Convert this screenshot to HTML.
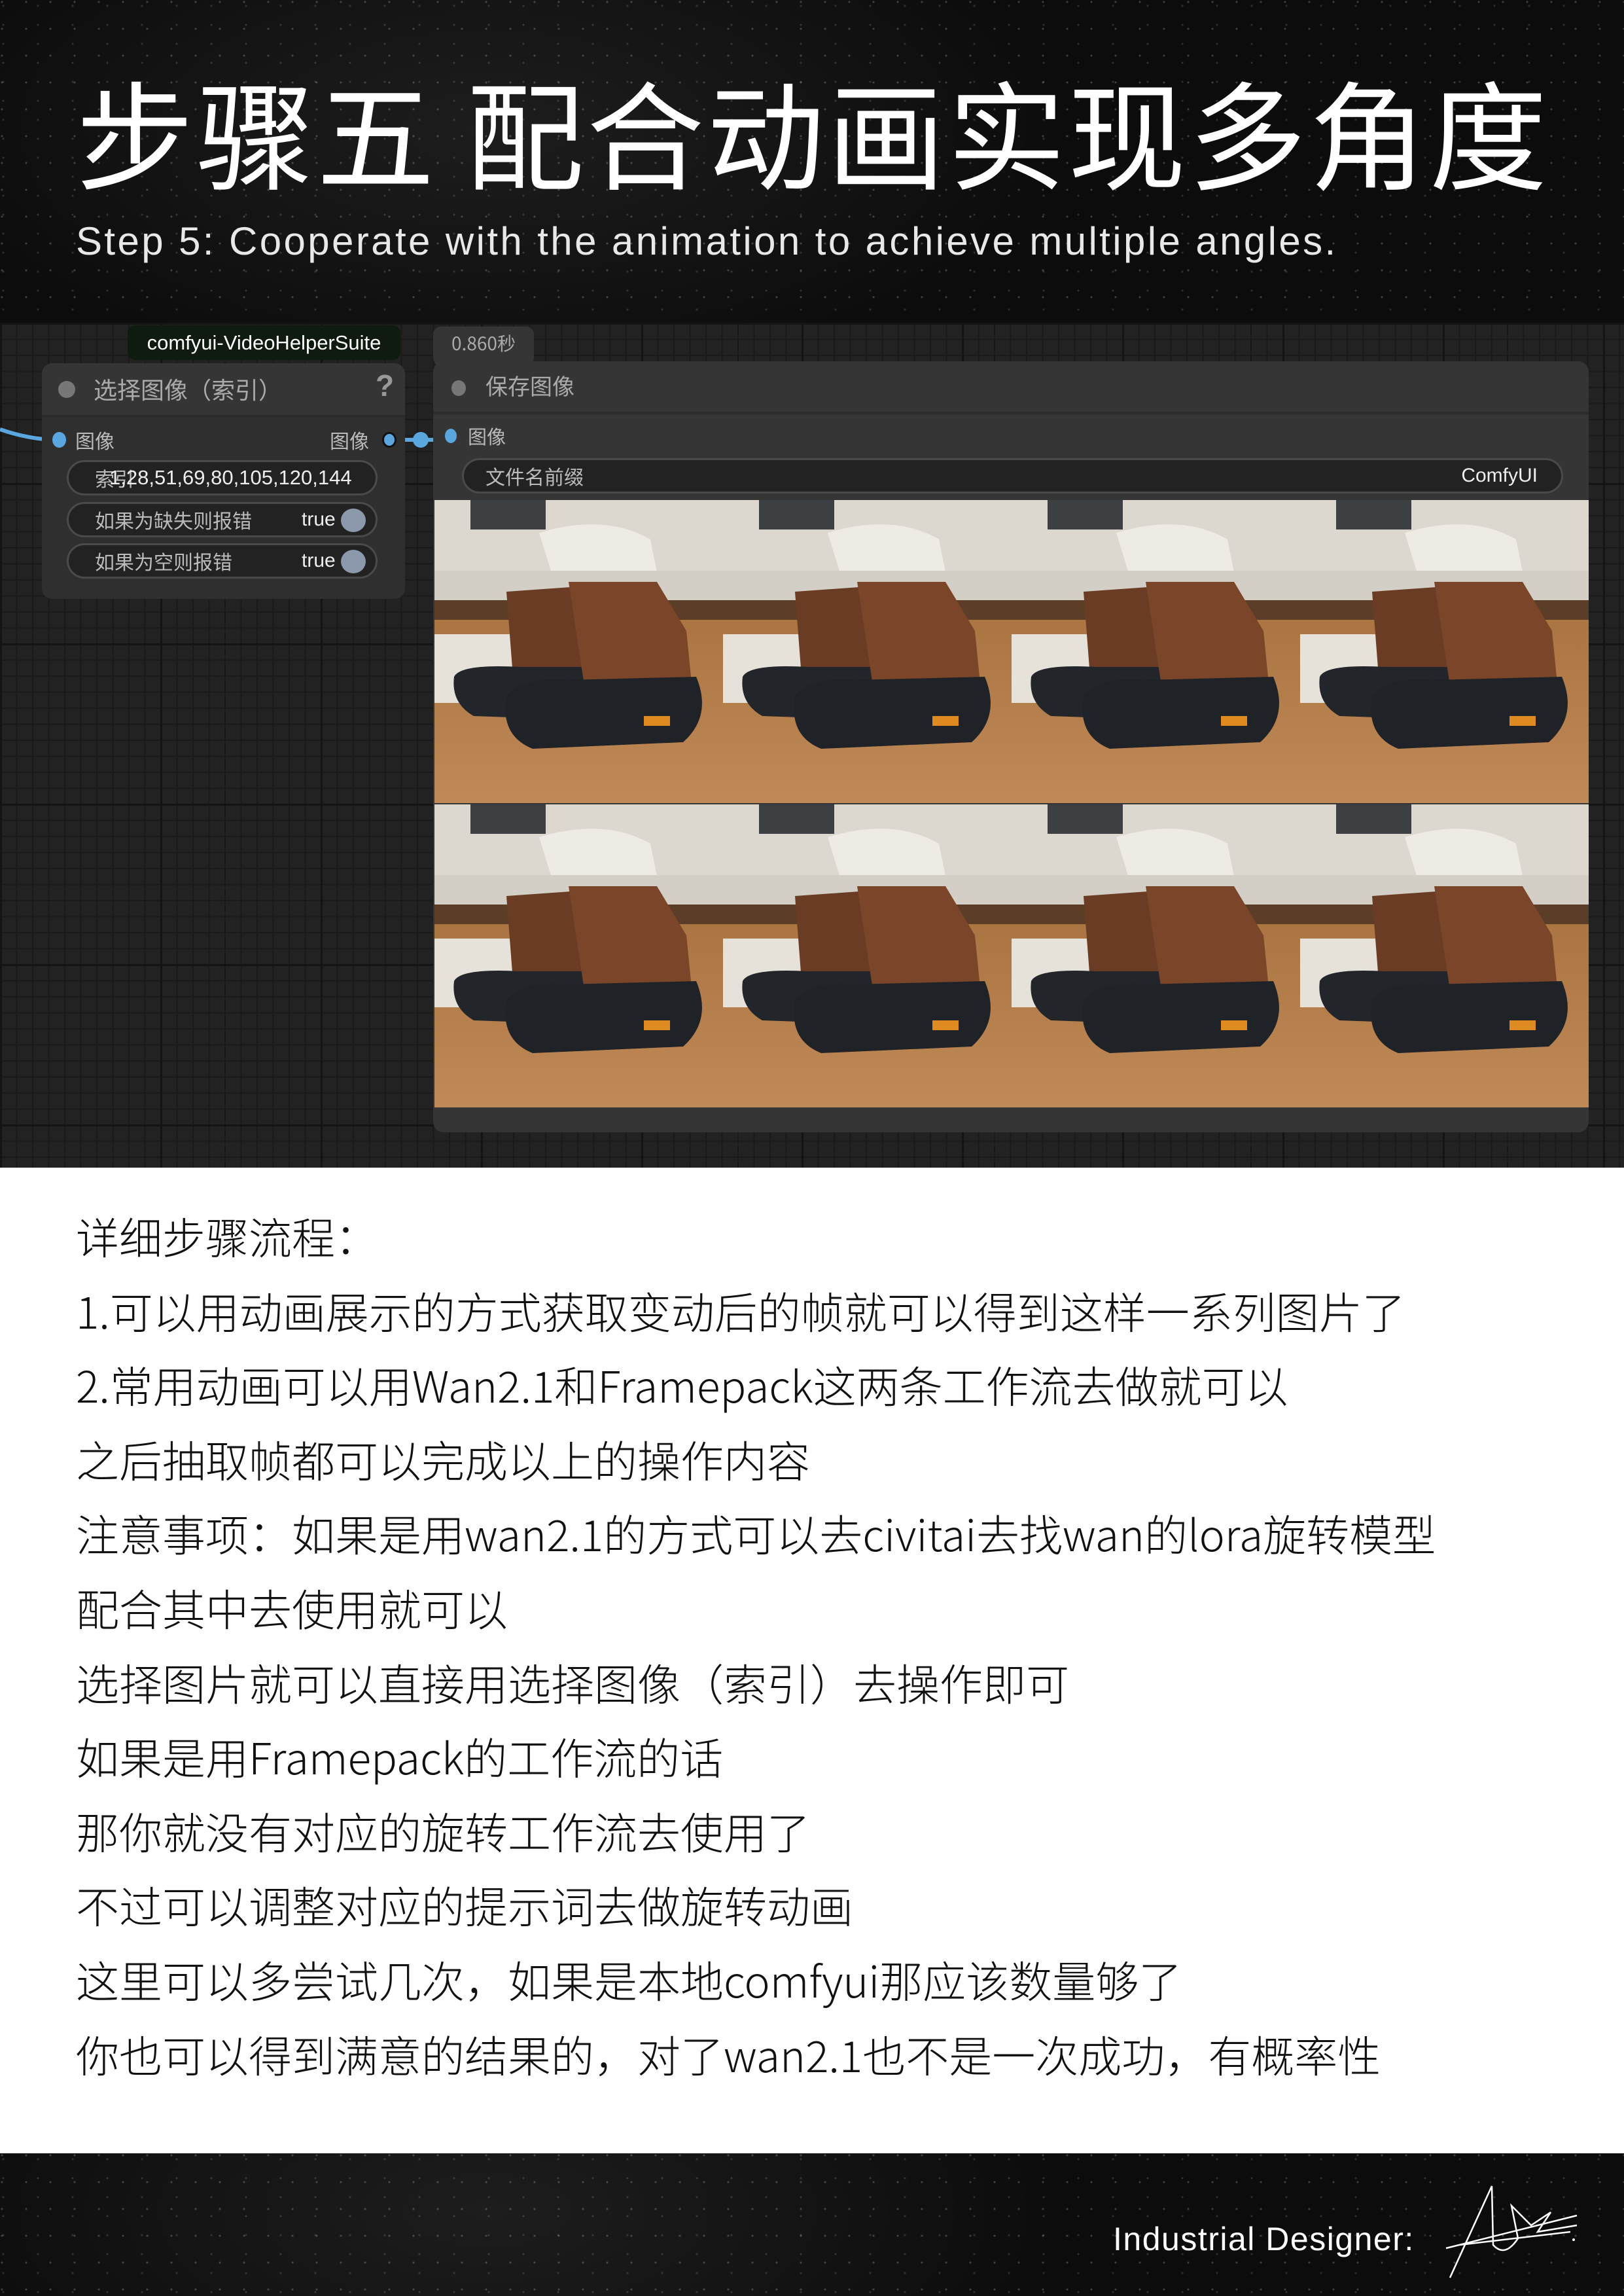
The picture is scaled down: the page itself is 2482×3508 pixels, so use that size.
<!DOCTYPE html>
<html><head><meta charset="utf-8"><style>
*{margin:0;padding:0;box-sizing:border-box}
html,body{width:2482px;height:3508px;overflow:hidden;background:#fff}
body{position:relative;font-family:"Liberation Sans","Noto Sans CJK SC",sans-serif}
.abs{position:absolute}
.space{background:
radial-gradient(circle at 3px 3px,rgba(255,255,255,.22) 1px,transparent 2px) 0 0/37px 41px,
radial-gradient(circle at 5px 9px,rgba(255,255,255,.15) 1px,transparent 2px) 0 0/53px 29px,
radial-gradient(ellipse 900px 400px at 30% 40%,rgba(255,255,255,.07),transparent),
#0c0c0c;}
.title{left:116px;top:88px;font-family:"Noto Sans CJK SC",sans-serif;font-size:180px;line-height:220px;color:#fff;font-weight:400;letter-spacing:4px;white-space:nowrap}
.sub{left:116px;top:334px;font-family:"Liberation Sans",sans-serif;font-size:60px;color:#e8e8e8;font-weight:300;white-space:nowrap;letter-spacing:3.4px}
.grid{left:0;top:493px;width:2482px;height:1291px;background-color:#222;
background-image:linear-gradient(#141414 3px,transparent 3px),linear-gradient(90deg,#141414 3px,transparent 3px),linear-gradient(#1a1a1a 2px,transparent 2px),linear-gradient(90deg,#1a1a1a 2px,transparent 2px);
background-size:245px 245px,245px 245px,24.5px 24.5px,24.5px 24.5px}
.cj{font-family:"Noto Sans CJK SC",sans-serif}
.node{background:#353535;border-radius:16px}
.pill{position:absolute;background:#222;border:3px solid #4a4a4a;border-radius:30px;color:#bbb;font-size:30px;font-family:"Noto Sans CJK SC",sans-serif;line-height:48px;white-space:nowrap}
.dot{position:absolute;width:18px;height:18px;border-radius:50%}
.tog{position:absolute;top:7px;width:38px;height:36px;border-radius:50%;background:#8c98ab}
.pill .v{position:absolute;top:0;color:#eee;font-family:"Liberation Sans",sans-serif}
.body{left:116px;top:1832px;font-family:"Noto Sans CJK SC",sans-serif;font-weight:300;font-size:66px;line-height:113.6px;color:#111;white-space:nowrap}
</style></head><body>
<div class="abs space" style="left:0;top:0;width:2482px;height:493px"></div>
<div class="abs title">步骤五 配合动画实现多角度</div>
<div class="abs sub">Step 5: Cooperate with the animation to achieve multiple angles.</div>

<div class="abs grid"></div>
<div class="abs" style="left:195px;top:497px;width:417px;height:53px;background:#0f1a10;border-radius:12px;color:#fff;font-size:31px;line-height:53px;text-align:center">comfyui-VideoHelperSuite</div>
<div class="abs cj" style="left:662px;top:499px;width:154px;height:60px;background:#353535;border-radius:12px;color:#aaa;font-size:28px;line-height:50px;text-align:center">0.860秒</div>
<svg class="abs" style="left:0;top:600px" width="700" height="100"><path d="M0 56 Q40 70 80 72" stroke="#5aa7e0" stroke-width="6" fill="none"/><path d="M606 72 L666 72" stroke="#5aa7e0" stroke-width="6"/><circle cx="643" cy="72" r="12" fill="#5aa7e0"/></svg>
<div class="abs node" style="left:64px;top:555px;width:555px;height:360px;background:#2f2f2f">
 <div style="height:82px;background:#353535;border-radius:16px 16px 0 0;border-bottom:3px solid #2a2a2a"></div>
</div>
<div class="dot abs" style="left:89px;top:582px;width:26px;height:26px;background:#777"></div>
<div class="abs cj" style="left:143px;top:568px;color:#aaa;font-size:36px">选择图像（索引）</div>
<div class="abs" style="left:574px;top:562px;color:#999;font-size:46px;font-weight:bold">?</div>
<div class="dot abs" style="left:80px;top:660px;width:21px;height:24px;background:#5aa7e0"></div>
<div class="abs cj" style="left:115px;top:650px;color:#bbb;font-size:30px">图像</div>
<div class="abs cj" style="left:504px;top:650px;color:#bbb;font-size:30px">图像</div>
<div class="dot abs" style="left:584px;top:660px;width:22px;height:24px;background:#5aa7e0;border:3px solid #111"></div>
<div class="pill" style="left:102px;top:703px;width:475px;height:54px"><span style="position:absolute;left:40px;color:#bbb">索引</span><span style="position:absolute;left:62px;color:#eee;font-family:'Liberation Sans';font-size:31px">1,28,51,69,80,105,120,144</span></div>
<div class="pill" style="left:102px;top:767px;width:475px;height:54px;padding-left:40px">如果为缺失则报错<span class="v" style="left:356px">true</span><span class="tog" style="left:416px"></span></div>
<div class="pill" style="left:102px;top:830px;width:475px;height:54px;padding-left:40px">如果为空则报错<span class="v" style="left:356px">true</span><span class="tog" style="left:416px"></span></div>
<div class="abs node" style="left:662px;top:552px;width:1766px;height:1178px;background:#353535">
 <div style="height:81px;border-bottom:4px solid #2b2b2b"></div>
</div>
<div class="dot abs" style="left:690px;top:581px;width:22px;height:24px;background:#777"></div>
<div class="abs cj" style="left:742px;top:564px;color:#aaa;font-size:34px">保存图像</div>
<div class="dot abs" style="left:680px;top:655px;width:18px;height:22px;background:#5aa7e0"></div>
<div class="abs cj" style="left:715px;top:645px;color:#bbb;font-size:29px">图像</div>
<div class="pill" style="left:706px;top:700px;width:1683px;height:54px;padding-left:33px">文件名前缀<span class="v" style="right:36px">ComfyUI</span></div>
<svg class="abs" style="left:664px;top:764px" width="1764" height="928" viewBox="0 0 1764 928">
<defs>
<linearGradient id="fl" x1="0" y1="0" x2="0" y2="1"><stop offset="0" stop-color="#7a5232"/><stop offset=".3" stop-color="#a8723f"/><stop offset="1" stop-color="#c08a58"/></linearGradient>
<g id="c">
<rect width="441" height="463" fill="url(#fl)"/>
<rect width="441" height="110" fill="#dcd8d0"/>
<rect x="55" y="0" width="115" height="45" fill="#3d4043"/>
<path d="M160 50 Q260 20 330 60 L340 110 L180 115Z" fill="#eeebe4"/>
<rect x="0" y="108" width="441" height="45" fill="#d3cfc7"/>
<rect x="0" y="153" width="441" height="30" fill="#5c3d27"/>
<rect x="0" y="205" width="150" height="105" fill="#e6e2da"/>
<path d="M110 140 L250 130 L270 250 L120 270Z" fill="#6b3c24"/>
<path d="M30 270 Q40 250 130 255 L250 255 Q260 310 200 335 L60 330 Q25 310 30 270Z" fill="#222529"/>
<path d="M205 125 L340 125 L385 200 L395 300 L230 290Z" fill="#7a4528"/>
<path d="M110 300 Q130 270 200 275 L400 270 Q425 330 380 370 L150 380 Q100 360 110 300Z" fill="#1f2226"/>
<rect x="320" y="330" width="40" height="15" fill="#e08a22"/>
</g>
</defs>
<use href="#c" x="0" y="0"/><use href="#c" x="441" y="0"/><use href="#c" x="882" y="0"/><use href="#c" x="1323" y="0"/>
<use href="#c" x="0" y="465"/><use href="#c" x="441" y="465"/><use href="#c" x="882" y="465"/><use href="#c" x="1323" y="465"/>
</svg>

<div class="abs body">详细步骤流程：<br>1.可以用动画展示的方式获取变动后的帧就可以得到这样一系列图片了<br>2.常用动画可以用Wan2.1和Framepack这两条工作流去做就可以<br>之后抽取帧都可以完成以上的操作内容<br>注意事项：如果是用wan2.1的方式可以去civitai去找wan的lora旋转模型<br>配合其中去使用就可以<br>选择图片就可以直接用选择图像（索引）去操作即可<br>如果是用Framepack的工作流的话<br>那你就没有对应的旋转工作流去使用了<br>不过可以调整对应的提示词去做旋转动画<br>这里可以多尝试几次，如果是本地comfyui那应该数量够了<br>你也可以得到满意的结果的，对了wan2.1也不是一次成功，有概率性</div>

<div class="abs space" style="left:0;top:3290px;width:2482px;height:218px"></div>
<div class="abs" style="left:1701px;top:3392px;color:#fff;font-size:50px;font-weight:300;white-space:nowrap;letter-spacing:1.5px">Industrial Designer:</div>
<svg class="abs" style="left:2200px;top:3330px" width="220" height="170"><path d="M16 150 L80 10 L82 100 Q100 120 120 90 L110 40 L140 70 L170 50 L150 80 L210 70 M10 105 L210 55 M30 100 L200 80" stroke="#fff" stroke-width="2.5" fill="none"/><circle cx="205" cy="92" r="2" fill="#fff"/></svg>
</body></html>
